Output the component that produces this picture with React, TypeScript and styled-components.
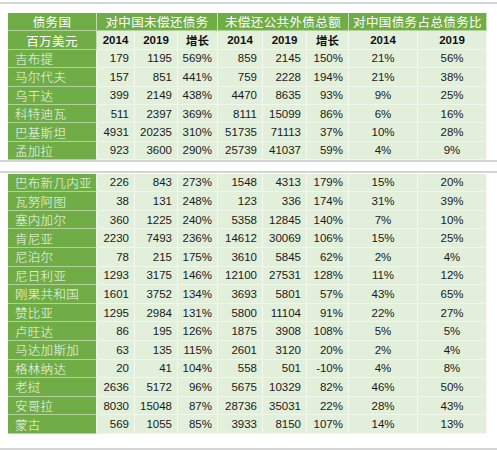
import React from 'react'
import styled, { createGlobalStyle } from 'styled-components'

const GlobalStyle = createGlobalStyle`
  html, body {
    margin: 0;
    padding: 0;
    background: #ffffff;
  }
`

const GREEN = '#70ad47'
const LIGHT = '#e2efda'
const COLS = '89px 38px 43px 40px 45px 44px 42px 69px 69px'

const Page = styled.div`
  width: 497px;
  height: 450px;
  display: flex;
  flex-direction: column;
  overflow: hidden;
  font-family: "Liberation Sans", "Noto Sans CJK SC", sans-serif;
`

const Sheet = styled.section<{ $top: number; $padTop: number; $padBottom: number }>`
  margin-top: ${(p) => p.$top}px;
  padding: ${(p) => p.$padTop}px 10px ${(p) => p.$padBottom}px 8px;
  border-top: 2px solid #d5d5d5;
  border-bottom: 2px solid #d5d5d5;
`

const Grid = styled.div<{ $rowH: number }>`
  display: grid;
  grid-template-columns: ${COLS};
  grid-auto-rows: ${(p) => p.$rowH}px;
  width: 479px;
`

const Cell = styled.div<{ $span?: number; $align?: 'left' | 'center' | 'right' }>`
  grid-column: span ${(p) => p.$span ?? 1};
  display: flex;
  align-items: center;
  justify-content: ${(p) =>
    p.$align === 'left' ? 'flex-start' : p.$align === 'right' ? 'flex-end' : 'center'};
  box-sizing: border-box;
  border-right: 1px solid rgba(255, 255, 255, 0.6);
  border-bottom: 1px solid rgba(255, 255, 255, 0.45);
  white-space: nowrap;
  overflow: hidden;
`

const GroupHead = styled(Cell)`
  background: ${GREEN};
  color: #ffffff;
  font-family: "Noto Sans CJK SC", sans-serif;
  font-size: 12.5px;
  letter-spacing: 0.4px;
`

const SubHead = styled(Cell)`
  background: ${LIGHT};
  color: #111111;
  font-weight: bold;
  font-size: 11.5px;
  font-family: "Liberation Sans", "Noto Sans CJK SC", sans-serif;
`

const Country = styled(Cell)`
  background: ${GREEN};
  color: #f4f9f0;
  font-family: "Noto Sans CJK SC", sans-serif;
  font-weight: 300;
  font-size: 12.5px;
  letter-spacing: 0.3px;
  padding-left: 7px;
  border-right-color: rgba(255, 255, 255, 0.9);
`

const Num = styled(Cell)`
  background: ${LIGHT};
  color: #1a1a1a;
  font-size: 11.5px;
  padding-right: ${(p) => (p.$align === 'right' ? 5 : 0)}px;
`

type Row = [string, ...(string | number)[]]

const top: Row[] = [
  ['吉布提', 179, 1195, '569%', 859, 2145, '150%', '21%', '56%'],
  ['马尔代夫', 157, 851, '441%', 759, 2228, '194%', '21%', '38%'],
  ['乌干达', 399, 2149, '438%', 4470, 8635, '93%', '9%', '25%'],
  ['科特迪瓦', 511, 2397, '369%', 8111, 15099, '86%', '6%', '16%'],
  ['巴基斯坦', 4931, 20235, '310%', 51735, 71113, '37%', '10%', '28%'],
  ['孟加拉', 923, 3600, '290%', 25739, 41037, '59%', '4%', '9%'],
]

const bottom: Row[] = [
  ['巴布新几内亚', 226, 843, '273%', 1548, 4313, '179%', '15%', '20%'],
  ['瓦努阿图', 38, 131, '248%', 123, 336, '174%', '31%', '39%'],
  ['塞内加尔', 360, 1225, '240%', 5358, 12845, '140%', '7%', '10%'],
  ['肯尼亚', 2230, 7493, '236%', 14612, 30069, '106%', '15%', '25%'],
  ['尼泊尔', 78, 215, '175%', 3610, 5845, '62%', '2%', '4%'],
  ['尼日利亚', 1293, 3175, '146%', 12100, 27531, '128%', '11%', '12%'],
  ['刚果共和国', 1601, 3752, '134%', 3693, 5801, '57%', '43%', '65%'],
  ['赞比亚', 1295, 2984, '131%', 5800, 11104, '91%', '22%', '27%'],
  ['卢旺达', 86, 195, '126%', 1875, 3908, '108%', '5%', '5%'],
  ['马达加斯加', 63, 135, '115%', 2601, 3120, '20%', '2%', '4%'],
  ['格林纳达', 20, 41, '104%', 558, 501, '-10%', '4%', '8%'],
  ['老挝', 2636, 5172, '96%', 5675, 10329, '82%', '46%', '50%'],
  ['安哥拉', 8030, 15048, '87%', 28736, 35031, '22%', '28%', '43%'],
  ['蒙古', 569, 1055, '85%', 3933, 8150, '107%', '14%', '13%'],
]

function DataRow({ row }: { row: Row }) {
  const [name, ...vals] = row
  return (
    <>
      <Country $align="left">{name}</Country>
      {vals.map((v, i) => (
        <Num key={i} $align={i < 6 ? 'right' : 'center'}>
          {v}
        </Num>
      ))}
    </>
  )
}

export default function App() {
  return (
    <Page>
      <GlobalStyle />
      <Sheet $top={2} $padTop={9} $padBottom={0}>
        <Grid $rowH={18.4}>
          <GroupHead>债务国</GroupHead>
          <GroupHead $span={3}>对中国未偿还债务</GroupHead>
          <GroupHead $span={3}>未偿还公共外债总额</GroupHead>
          <GroupHead $span={2}>对中国债务占总债务比</GroupHead>

          <GroupHead>百万美元</GroupHead>
          <SubHead>2014</SubHead>
          <SubHead>2019</SubHead>
          <SubHead>增长</SubHead>
          <SubHead>2014</SubHead>
          <SubHead>2019</SubHead>
          <SubHead>增长</SubHead>
          <SubHead>2014</SubHead>
          <SubHead>2019</SubHead>

          {top.map((r) => (
            <DataRow key={r[0]} row={r} />
          ))}
        </Grid>
      </Sheet>
      <Sheet $top={9} $padTop={0.5} $padBottom={14}>
        <Grid $rowH={18.6}>
          {bottom.map((r) => (
            <DataRow key={r[0]} row={r} />
          ))}
        </Grid>
      </Sheet>
    </Page>
  )
}
